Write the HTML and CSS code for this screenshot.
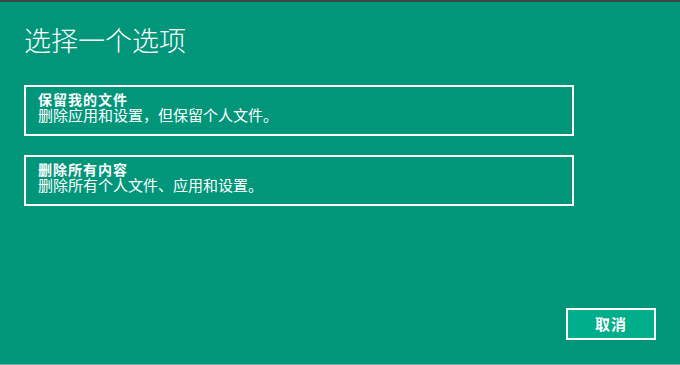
FILE: index.html
```html
<!DOCTYPE html>
<html lang="zh-CN">
<head>
<meta charset="utf-8">
<title>选择一个选项</title>
<link rel="stylesheet" href="styles.css">
</head>
<body>
<div class="screen">
  <h1 class="title">选择一个选项</h1>
  <div class="options">
    <div class="option">
      <div class="option-name">保留我的文件</div>
      <div class="option-desc">删除应用和设置，但保留个人文件。</div>
    </div>
    <div class="option">
      <div class="option-name">删除所有内容</div>
      <div class="option-desc">删除所有个人文件、应用和设置。</div>
    </div>
  </div>
  <div class="footer">
    <button class="cancel">取消</button>
  </div>
</div>
</body>
</html>
```
FILE: styles.css
```css
html, body {
  margin: 0;
  padding: 0;
}
body {
  width: 680px;
  height: 365px;
  background: #01967a;
  font-family: "Noto Sans CJK SC", "Noto Sans", sans-serif;
  color: #ffffff;
  overflow: hidden;
}
.screen {
  box-sizing: border-box;
  height: 365px;
  border-top: 2px solid #3d4446;
  border-bottom: 1px solid #6fae9f;
  padding: 24px 24px 24px 24px;
  display: flex;
  flex-direction: column;
}
.title {
  margin: 0 0 32px 0;
  font-size: 27px;
  line-height: 27px;
  height: 27px;
  font-weight: 300;
  letter-spacing: 0;
}
.options {
  display: flex;
  flex-direction: column;
  gap: 19px;
}
.option {
  box-sizing: border-box;
  width: 550px;
  height: 51px;
  border: 2px solid #ffffff;
  padding: 5px 12px 0 12px;
}
.option-name {
  font-size: 14px;
  font-weight: 700;
  line-height: 14px;
  letter-spacing: 1px;
}
.option-desc {
  font-size: 15px;
  line-height: 17px;
  letter-spacing: 0;
}
.footer {
  margin-top: auto;
  display: flex;
  justify-content: flex-end;
}
.cancel {
  box-sizing: border-box;
  width: 90px;
  height: 32px;
  border: 2px solid #ffffff;
  background: #00ae8c;
  color: #ffffff;
  font-family: "Noto Sans CJK SC", "Noto Sans", sans-serif;
  font-size: 15px;
  font-weight: 700;
  letter-spacing: 1px;
  padding: 0;
  line-height: 28px;
}
```
